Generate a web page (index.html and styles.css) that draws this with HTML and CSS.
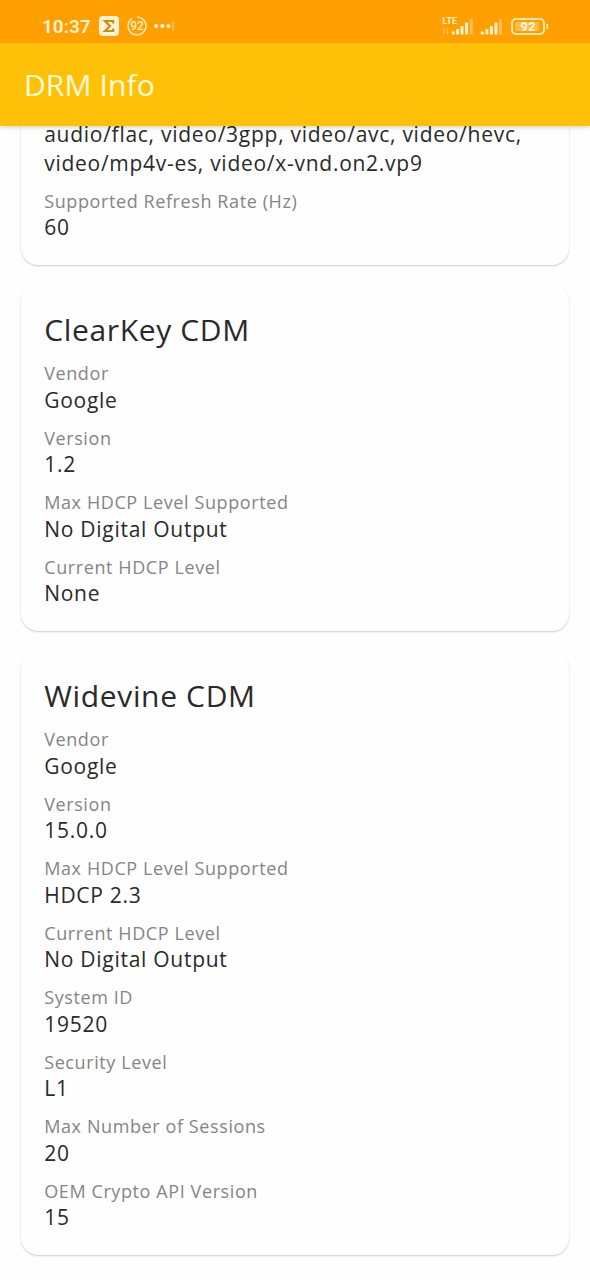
FILE: index.html
```html
<!DOCTYPE html>
<html lang="en">
<head>
    <meta charset="UTF-8">
    <title>DRM Info</title>
    <meta name="viewport" content="width=device-width, initial-scale=1.0">
    <link rel="stylesheet" href="styles.css">
</head>
<body>

    <!-- Status bar -->
    <div class="status-bar">
        <div class="status-left">
            <span class="clock">10:37</span>
            <svg class="sigma" width="20" height="20" viewBox="0 0 20 20">
                <rect width="20" height="20" rx="4" fill="#fff3d4"/>
                <path d="M14.2 7.4V5H6l5 5-5 5h8.2v-2.4" fill="none" stroke="#d08c14" stroke-width="2.2"/>
            </svg>
            <svg class="ring" width="20" height="20" viewBox="0 0 20 20">
                <circle cx="10" cy="10" r="9" fill="none" stroke="#ffe9b8" stroke-width="1.5" stroke-dasharray="51 5.5" transform="rotate(-90 10 10)"/>
                <text x="10" y="14.2" text-anchor="middle" class="ring-text">92</text>
            </svg>
            <svg class="dots" width="20" height="10" viewBox="0 0 20 10">
                <circle cx="2.2" cy="5" r="2.1" fill="#fff3d4"/>
                <circle cx="8.4" cy="5" r="2.1" fill="#fff3d4"/>
                <circle cx="14.6" cy="5" r="2.1" fill="#fff3d4"/>
                <path d="M19 0v10" stroke="#ffd580" stroke-width="1"/>
            </svg>
        </div>
        <div class="status-right">
            <svg width="31" height="20" viewBox="0 0 31 20">
                <text x="0.6" y="8" class="lte">LTE</text>
                <path d="M2 18v-6M0.7 13.4L2 12M5 12v6M6.3 16.6L5 18" fill="none" stroke="#ffd084" stroke-width="0.9"/>
                <path d="M11.3 18.5v-3M15.6 18.5v-5.5M20 18.5v-8.5M24.6 18.5V6.5" stroke="#fff0cc" stroke-width="3"/>
                <path d="M29.3 18.5V3" stroke="#ffc05a" stroke-width="2.8"/>
            </svg>
            <svg class="signal" width="22" height="20" viewBox="0 0 22 20">
                <path d="M2.3 18.5v-3M6.9 18.5v-5.5M11.4 18.5v-8.5M16 18.5V6.5" stroke="#fff0cc" stroke-width="3"/>
                <path d="M20.5 18.5V3" stroke="#ffc05a" stroke-width="2.8"/>
            </svg>
            <svg class="battery" width="38" height="18" viewBox="0 0 38 18">
                <rect x="1" y="1" width="32" height="15" rx="4" fill="none" stroke="#ffe9b0" stroke-width="1.9"/>
                <rect x="4" y="4" width="24" height="9" rx="1" fill="#ffbb45"/>
                <path d="M36.3 6v5" stroke="#ffe9b0" stroke-width="1.8"/>
                <text x="17" y="13.2" text-anchor="middle" class="battery-text">92</text>
            </svg>
        </div>
    </div>

    <!-- App bar -->
    <div class="app-bar">
        <h1>DRM Info</h1>
    </div>

    <div class="content">
        <div class="card">
            <div class="item">
                <div class="value">audio/flac, video/3gpp, video/avc, video/hevc, video/mp4v-es, video/x-vnd.on2.vp9</div>
            </div>
            <div class="item">
                <div class="label">Supported Refresh Rate (Hz)</div>
                <div class="value">60</div>
            </div>
        </div>

        <div class="card">
            <h2>ClearKey CDM</h2>
            <div class="item">
                <div class="label">Vendor</div>
                <div class="value">Google</div>
            </div>
            <div class="item">
                <div class="label">Version</div>
                <div class="value">1.2</div>
            </div>
            <div class="item">
                <div class="label">Max HDCP Level Supported</div>
                <div class="value">No Digital Output</div>
            </div>
            <div class="item">
                <div class="label">Current HDCP Level</div>
                <div class="value">None</div>
            </div>
        </div>

        <div class="card">
            <h2>Widevine CDM</h2>
            <div class="item">
                <div class="label">Vendor</div>
                <div class="value">Google</div>
            </div>
            <div class="item">
                <div class="label">Version</div>
                <div class="value">15.0.0</div>
            </div>
            <div class="item">
                <div class="label">Max HDCP Level Supported</div>
                <div class="value">HDCP 2.3</div>
            </div>
            <div class="item">
                <div class="label">Current HDCP Level</div>
                <div class="value">No Digital Output</div>
            </div>
            <div class="item">
                <div class="label">System ID</div>
                <div class="value">19520</div>
            </div>
            <div class="item">
                <div class="label">Security Level</div>
                <div class="value">L1</div>
            </div>
            <div class="item">
                <div class="label">Max Number of Sessions</div>
                <div class="value">20</div>
            </div>
            <div class="item">
                <div class="label">OEM Crypto API Version</div>
                <div class="value">15</div>
            </div>
        </div>
    </div>

</body>
</html>
```
FILE: styles.css
```css
body {
    background-color: #fefefe;
    color: #2a2a2a;
    font-family: 'Open Sans', sans-serif;
    margin: 0;
    height: 1280px;
    display: flex;
    flex-direction: column;
    overflow: hidden;
}

/* Status bar */
.status-bar {
    flex: none;
    box-sizing: border-box;
    height: 43px;
    padding: 16px 41px 0 42px;
    background: #ff9f00;
    display: flex;
    justify-content: space-between;
    align-items: flex-start;
    z-index: 2;
}

.status-left,
.status-right {
    display: flex;
    align-items: flex-start;
}

.clock {
    color: #fff3d4;
    font-family: Roboto, sans-serif;
    font-size: 19px;
    font-weight: 600;
    line-height: 22px;
    width: 57px;
}

.ring {
    margin-left: 8px;
}

.dots {
    margin: 5px 0 0 7px;
}

.ring-text {
    fill: #fff0cc;
    font: 500 12px Roboto, sans-serif;
}

.lte {
    fill: #fff0cc;
    font: 700 9px Roboto, sans-serif;
}

.signal {
    margin: 0 9px 0 7px;
}

.battery {
    margin-top: 2px;
}

.battery-text {
    fill: #fff8e4;
    font: 700 13px Roboto, sans-serif;
}

/* App bar */
.app-bar {
    flex: none;
    height: 83px;
    padding: 0 24px;
    background: #ffc107;
    box-shadow: 0 1px 5px rgba(0, 0, 0, 0.2);
    display: flex;
    align-items: center;
    z-index: 1;
}

.app-bar h1 {
    color: #fffbdc;
    font-size: 30px;
    font-weight: 400;
    letter-spacing: 0.1px;
    margin: 0;
}

/* Cards */
.content {
    padding: 0 21px;
    margin-top: -29.8px;
}

.card {
    margin-bottom: 20px;
    padding: 24px 23.2px 23.5px;
    background: #fefefe;
    border-radius: 17px;
    box-shadow: 0 1px 2px rgba(0, 0, 0, 0.2);
}

.card h2 {
    font-size: 30px;
    font-weight: 400;
    line-height: 41px;
    letter-spacing: 0.65px;
    margin: 0 0 11px;
}

.item {
    margin-bottom: 11.5px;
}

.item:last-child {
    margin-bottom: 0;
}

.label {
    color: #858585;
    font-size: 18px;
    line-height: 24.5px;
    letter-spacing: 0.6px;
}

.value {
    font-size: 21px;
    line-height: 28.5px;
    letter-spacing: 0.73px;
}
```
